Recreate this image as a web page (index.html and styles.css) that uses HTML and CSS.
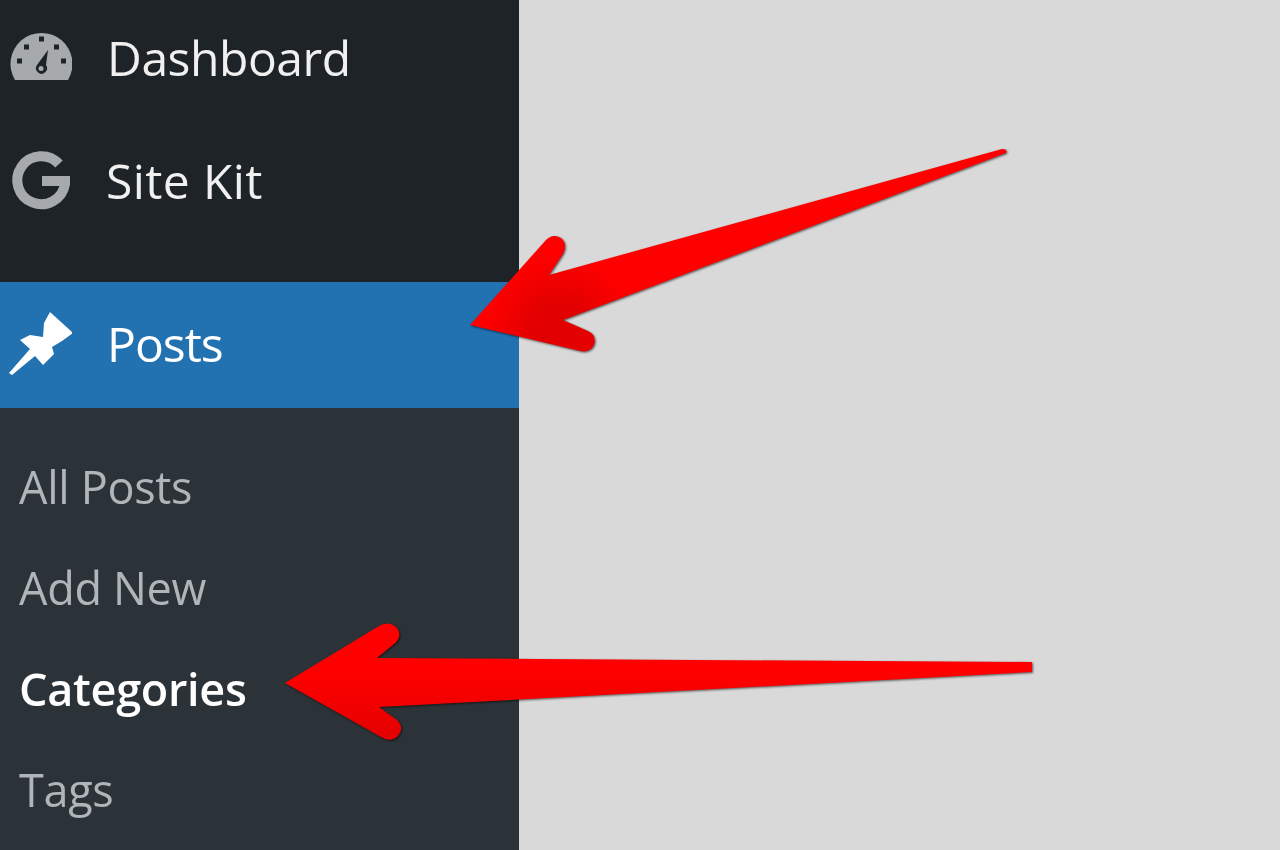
FILE: index.html
```html
<!DOCTYPE html>
<html lang="en">
<head>
<meta charset="utf-8">
<title>Posts menu</title>
<link rel="stylesheet" href="styles.css">
</head>
<body>
<div class="page">
  <nav class="sidebar">
    <div class="top-menu">
      <a class="item dash">
        <svg class="icon" viewBox="0 0 72 90" width="72" height="90"><path fill="#a7aaad" d="M15 66A31 31 0 1 1 68 66Z"/><g fill="#1d2327"><rect x="17" y="44.500" width="5" height="5"/><rect x="24" y="30.500" width="5" height="5"/><rect x="39" y="22.500" width="5" height="5"/><rect x="54" y="30.500" width="5" height="5"/><rect x="61" y="44.500" width="5" height="5"/><path d="M48 36 46 51A5.500 5.500 0 1 1 37 51Z"/></g><circle cx="41" cy="54.500" r="2.500" fill="#a7aaad"/></svg>
        <span>Dashboard</span>
      </a>
      <a class="item kit">
        <svg class="icon" viewBox="0 0 72 90" width="72" height="90"><path fill="none" stroke="#a7aaad" stroke-width="10" d="M59 29A24 24 0 1 0 65 49V46H42"/></svg>
        <span>Site Kit</span>
      </a>
    </div>
    <a class="item posts">
      <svg class="icon" viewBox="0 0 72 90" width="72" height="90"><path fill="#fff" d="M9 73 30 49 20 40 30 35 43 37 44 23 50 12 73 33 62 41 52 47 54 54 43 65 35 56 12 75Z"/></svg>
      <span>Posts</span>
    </a>
    <ul class="submenu">
      <li>All Posts</li>
      <li>Add New</li>
      <li class="current">Categories</li>
      <li>Tags</li>
    </ul>
  </nav>
  <main class="content"></main>
  <svg class="arrows" viewBox="0 0 1280 850" width="1280" height="850">
    <defs>
      <radialGradient id="a1" gradientUnits="userSpaceOnUse" cx="560" cy="330" r="75"><stop offset="0" stop-color="#e00000"/><stop offset="0.4" stop-color="#e40000"/><stop offset="1" stop-color="#ff0000"/></radialGradient>
      <linearGradient id="a2" gradientUnits="userSpaceOnUse" x1="0" y1="675" x2="0" y2="735"><stop offset="0" stop-color="#ff0000"/><stop offset="1" stop-color="#e40000"/></linearGradient>
    </defs>
    <path class="arrow" fill="url(#a1)" d="M1002 149Q1008 149 1006 153L563 320 588 331Q597 335 594 345 590 353 580 351L470 325 546 240Q553 233 561 238 568 244 563 254L549 275Z"/>
    <path class="arrow" fill="url(#a2)" d="M1032 662V672L379 707 397 720Q405 728 398 736 391 743 381 737L285 683 379 626Q389 620 397 628 403 636 394 644L377 658Z"/>
  </svg>
</div>
</body>
</html>
```
FILE: styles.css
```css
* { box-sizing: border-box; }
html, body { margin: 0; padding: 0; height: 850px; overflow: hidden; }
body { font-family: "Open Sans", "Noto Sans", sans-serif; background: #d9d9d9; }
.page { position: relative; display: flex; width: 1280px; height: 850px; filter: blur(0.7px); }
.sidebar { width: 519px; flex: none; background: #2c3338; display: flex; flex-direction: column; overflow: hidden; }
.top-menu { height: 282px; background: #1d2327; display: flex; flex-direction: column; }
.item { display: flex; align-items: center; color: #f0f0f1; font-size: 48px; letter-spacing: -0.45px; }
.icon { flex: none; margin-right: 35px; }
.dash { height: 118px; }
.dash span { margin-bottom: 3px; }
.kit { height: 124px; letter-spacing: 0.4px; }
.kit .icon { margin-right: 34px; }
.posts { height: 126px; background: #2271b1; color: #fff; letter-spacing: -1px; }
.posts span { margin-bottom: 3px; }
.submenu { list-style: none; margin: 0; padding: 28px 0 0 19px; color: #b0b5ba; font-size: 45px; letter-spacing: -0.3px; }
.submenu li { height: 101px; line-height: 101px; }
.submenu .current { color: #fff; font-weight: 600; }
.content { flex: 1; background: #d9d9d9; }
.arrows { position: absolute; left: 0; top: 0; }
.arrow { filter: drop-shadow(1px 1.5px 1px rgba(0,0,0,.6)); }
```
